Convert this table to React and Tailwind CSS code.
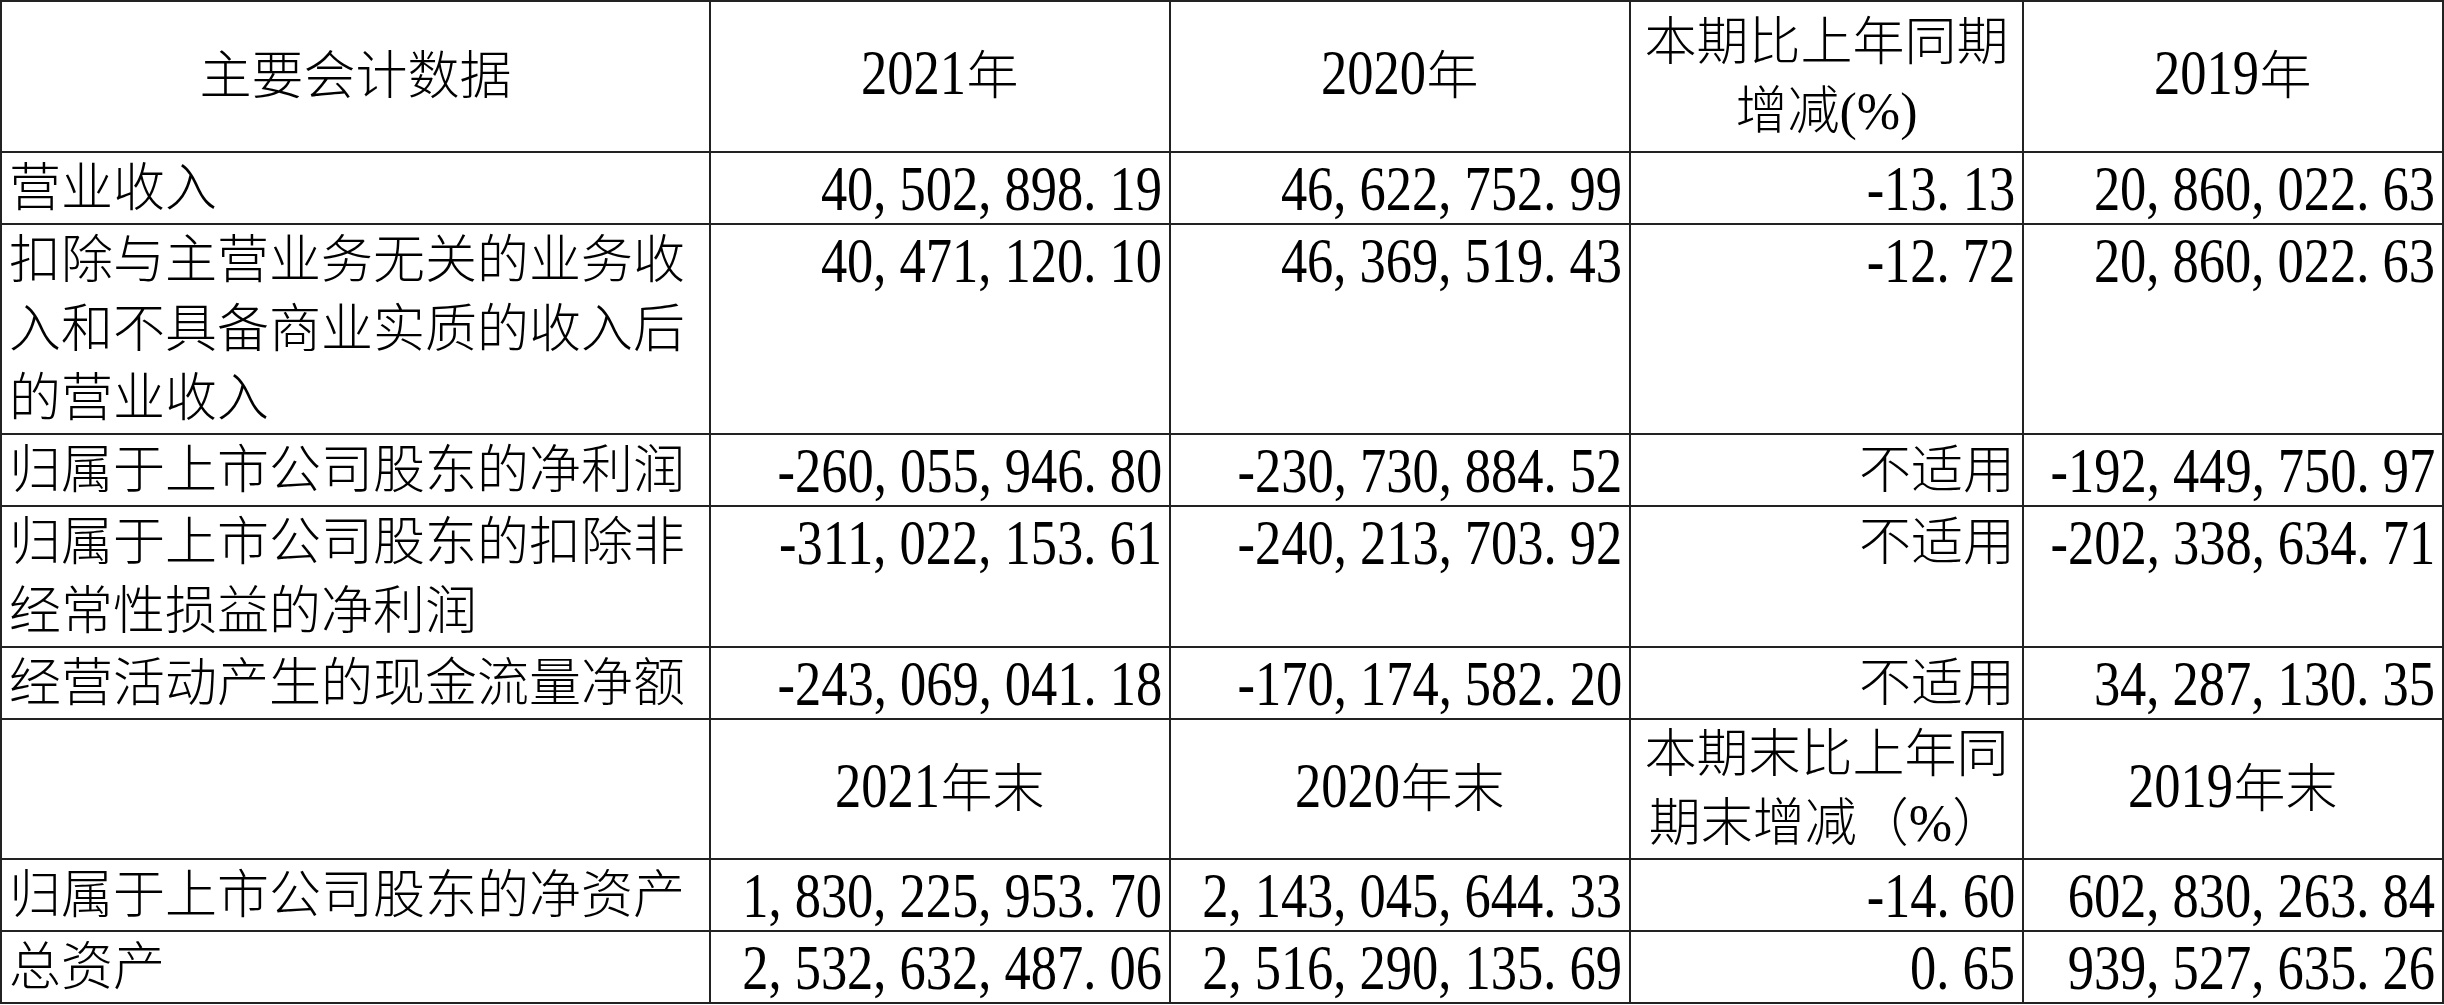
const cell = 'border-2 border-[#222] px-[7px]';

// half-width slots so commas and points take a full digit width, as in the source
function Num({ v }) {
  return (
    <div className="flex justify-end">
      <span className="inline-block whitespace-nowrap origin-right scale-x-[0.82] text-[64px] leading-[69px]">
        {v.split('').map((c, i) =>
          /[,.]/.test(c) ? <span key={i} className="inline-block w-[32px] text-left">{c}</span> : c
        )}
      </span>
    </div>
  );
}

function Year({ y, suffix }) {
  return (
    <span className="whitespace-nowrap">
      <span className="inline-block w-[105px] origin-left scale-x-[0.82] text-[64px] leading-[50px] text-left">{y}</span>
      {suffix}
    </span>
  );
}

const rows1 = [
  { label: '营业收入', h: 'h-[71px]', vals: ['40,502,898.19', '46,622,752.99', '-13.13', '20,860,022.63'] },
  { label: '扣除与主营业务无关的业务收入和不具备商业实质的收入后的营业收入', h: 'h-[206px]', vals: ['40,471,120.10', '46,369,519.43', '-12.72', '20,860,022.63'] },
  { label: '归属于上市公司股东的净利润', h: 'h-[71px]', vals: ['-260,055,946.80', '-230,730,884.52', '不适用', '-192,449,750.97'] },
  { label: '归属于上市公司股东的扣除非经常性损益的净利润', h: 'h-[137px]', vals: ['-311,022,153.61', '-240,213,703.92', '不适用', '-202,338,634.71'] },
  { label: '经营活动产生的现金流量净额', h: 'h-[71px]', vals: ['-243,069,041.18', '-170,174,582.20', '不适用', '34,287,130.35'] },
];

const rows2 = [
  { label: '归属于上市公司股东的净资产', vals: ['1,830,225,953.70', '2,143,045,644.33', '-14.60', '602,830,263.84'] },
  { label: '总资产', vals: ['2,532,632,487.06', '2,516,290,135.69', '0.65', '939,527,635.26'] },
];

function DataRow({ r, h }) {
  return (
    <tr className={h}>
      <td className={`${cell} align-top pt-[1px]`}>{r.label}</td>
      {r.vals.map((v, i) => (
        <td key={i} className={`${cell} align-top pt-[1px] text-right`}>
          {v === '不适用' ? v : <Num v={v} />}
        </td>
      ))}
    </tr>
  );
}

export default function App() {
  return (
    <div className="w-[2444px] h-[1005px] bg-white text-black overflow-hidden">
      <table
        className="table-fixed border-collapse w-[2442px] text-[52px] leading-[69px] font-light"
        style={{ fontFamily: '"Liberation Serif", "Noto Sans CJK SC", serif' }}
      >
        <colgroup>
          <col className="w-[709px]" />
          <col className="w-[460px]" />
          <col className="w-[460px]" />
          <col className="w-[393px]" />
          <col className="w-[420px]" />
        </colgroup>
        <tbody>
          <tr className="h-[151px]">
            <td className={`${cell} text-center align-middle`}>主要会计数据</td>
            <td className={`${cell} text-center align-middle`}><Year y="2021" suffix="年" /></td>
            <td className={`${cell} text-center align-middle`}><Year y="2020" suffix="年" /></td>
            <td className={`${cell} text-center align-middle px-0`}>本期比上年同期<br />增减(%)</td>
            <td className={`${cell} text-center align-middle`}><Year y="2019" suffix="年" /></td>
          </tr>
          {rows1.map((r, i) => (
            <DataRow key={i} r={r} h={r.h} />
          ))}
          <tr className="h-[138px]">
            <td className={cell}></td>
            <td className={`${cell} text-center align-middle`}><Year y="2021" suffix="年末" /></td>
            <td className={`${cell} text-center align-middle`}><Year y="2020" suffix="年末" /></td>
            <td className={`${cell} text-center align-middle px-0`}>本期末比上年同<br />期末增减（%）</td>
            <td className={`${cell} text-center align-middle`}><Year y="2019" suffix="年末" /></td>
          </tr>
          {rows2.map((r, i) => (
            <DataRow key={i} r={r} h="h-[71px]" />
          ))}
        </tbody>
      </table>
    </div>
  );
}
